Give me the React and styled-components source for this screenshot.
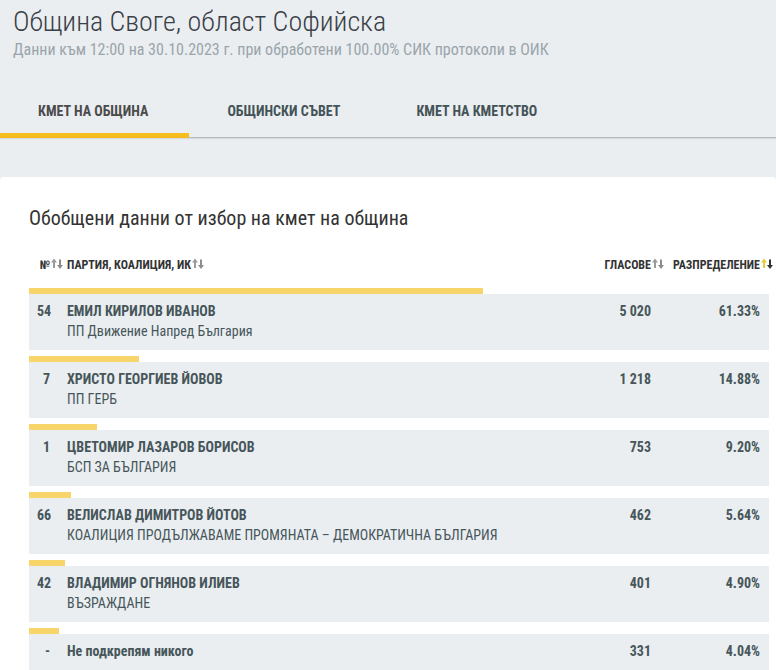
import React, { useState } from "react";
import styled, { createGlobalStyle } from "styled-components";

const GlobalStyle = createGlobalStyle`
  * {
    box-sizing: border-box;
  }

  body {
    margin: 0;
    background: #eaeef1;
    color: #47565a;
    font-family: "Roboto Condensed", Roboto, "Liberation Sans", sans-serif;
    font-size: 14px;
    line-height: 20px;
  }
`;

const Header = styled.header`
  padding: 4px 13px 28px;
`;

const Title = styled.h1`
  margin: 0;
  color: #3a3f47;
  font-size: 28px;
  font-weight: 300;
  line-height: 36px;
`;

const Subtitle = styled.p`
  margin: 0;
  color: #9aa5ab;
  font-size: 16px;
  line-height: 20px;
`;

const Tabs = styled.nav`
  display: flex;
  height: 50px;
  border-bottom: 1px solid #b3bac0;
  box-shadow: 0 1px 1px rgba(0, 0, 0, 0.08);
`;

const Tab = styled.button`
  margin-bottom: -1px;
  padding: 0 ${props => (props.$active ? "41px" : "38px")} 0 38px;
  border: 0;
  border-bottom: 5px solid ${props => (props.$active ? "#f5be1e" : "transparent")};
  background: none;
  color: ${props => (props.$active ? "#4b4b4b" : "#445357")};
  font: inherit;
  font-weight: 700;
  cursor: pointer;
`;

const Panel = styled.main`
  margin-top: 39px;
  padding: 27px 7px 0 29px;
  border-radius: 4px 4px 0 0;
  background: #fff;
`;

const PanelTitle = styled.h2`
  margin: 0 0 18px;
  color: #333;
  font-size: 20px;
  font-weight: 400;
  line-height: 28px;
`;

const Table = styled.table`
  width: 100%;
  border-collapse: collapse;
  table-layout: fixed;
`;

const Col = styled.col`
  width: ${props => props.$width || "auto"};
`;

const HeadCell = styled.th`
  height: 32px;
  padding: 4px 9px 4px 8px;
  text-align: ${props => props.$align || "left"};
  vertical-align: top;
`;

const SortButton = styled.button`
  position: relative;
  padding: 0;
  border: 0;
  background: none;
  color: #333;
  font: inherit;
  font-size: 12px;
  font-weight: 700;
  white-space: nowrap;
  cursor: pointer;
`;

const SortArrows = styled.svg`
  position: absolute;
  top: 3px;
  left: 100%;
  margin-left: 1px;
`;

const BarCell = styled.td`
  padding: 6px 0 0;
`;

const Bar = styled.div`
  height: 6px;
  background: #f7d56b;
`;

const Row = styled.tr`
  height: 56px;
  background: #eaeef1;
`;

const Cell = styled.td`
  padding: 7px 9px 9px 8px;
  font-weight: 700;
  text-align: ${props => props.$align || "left"};
  vertical-align: top;
`;

const Party = styled.div`
  font-weight: 400;
`;

const tabs = ["КМЕТ НА ОБЩИНА", "ОБЩИНСКИ СЪВЕТ", "КМЕТ НА КМЕТСТВО"];

const columns = [
  { id: "number", label: "№", align: "right" },
  { id: "name", label: "ПАРТИЯ, КОАЛИЦИЯ, ИК" },
  { id: "votes", label: "ГЛАСОВЕ", align: "right" },
  { id: "share", label: "РАЗПРЕДЕЛЕНИЕ", align: "right" }
];

const results = [
  { number: "54", name: "ЕМИЛ КИРИЛОВ ИВАНОВ", party: "ПП Движение Напред България", votes: "5 020", share: "61.33%" },
  { number: "7", name: "ХРИСТО ГЕОРГИЕВ ЙОВОВ", party: "ПП ГЕРБ", votes: "1 218", share: "14.88%" },
  { number: "1", name: "ЦВЕТОМИР ЛАЗАРОВ БОРИСОВ", party: "БСП ЗА БЪЛГАРИЯ", votes: "753", share: "9.20%" },
  { number: "66", name: "ВЕЛИСЛАВ ДИМИТРОВ ЙОТОВ", party: "КОАЛИЦИЯ ПРОДЪЛЖАВАМЕ ПРОМЯНАТА – ДЕМОКРАТИЧНА БЪЛГАРИЯ", votes: "462", share: "5.64%" },
  { number: "42", name: "ВЛАДИМИР ОГНЯНОВ ИЛИЕВ", party: "ВЪЗРАЖДАНЕ", votes: "401", share: "4.90%" },
  { number: "-", name: "Не подкрепям никого", votes: "331", share: "4.04%" }
];

function SortIcon({ active }) {
  return (
    <SortArrows width="12" height="12" viewBox="0 0 12 12" aria-hidden="true">
      <path d="M3 0.5L6 4.5H4V10H2V4.5H0Z" fill={active ? "#e3cb3a" : "#9b9b9b"} />
      <path d="M8 1.5H10V7H12L9 11L6 7H8Z" fill={active ? "#333" : "#8c8c8c"} />
    </SortArrows>
  );
}

function ResultRow({ result }) {
  return (
    <>
      <tr>
        <BarCell colSpan={4}>
          <Bar style={{ width: result.share }} />
        </BarCell>
      </tr>
      <Row>
        <Cell $align="right">{result.number}</Cell>
        <Cell>
          {result.name}
          {result.party && <Party>{result.party}</Party>}
        </Cell>
        <Cell $align="right">{result.votes}</Cell>
        <Cell $align="right">{result.share}</Cell>
      </Row>
    </>
  );
}

export default function App() {
  const [activeTab, setActiveTab] = useState(0);
  const [sortBy, setSortBy] = useState("share");

  return (
    <>
      <GlobalStyle />
      <Header>
        <Title>Община Своге, област Софийска</Title>
        <Subtitle>
          Данни към 12:00 на 30.10.2023 г. при обработени 100.00% СИК протоколи в ОИК
        </Subtitle>
      </Header>
      <Tabs>
        {tabs.map((tab, index) => (
          <Tab key={tab} $active={index === activeTab} onClick={() => setActiveTab(index)}>
            {tab}
          </Tab>
        ))}
      </Tabs>
      <Panel>
        <PanelTitle>Обобщени данни от избор на кмет на община</PanelTitle>
        <Table>
          <colgroup>
            <Col $width="30px" />
            <Col />
            <Col $width="100px" />
            <Col $width="109px" />
          </colgroup>
          <thead>
            <tr>
              {columns.map(column => (
                <HeadCell key={column.id} $align={column.align}>
                  <SortButton onClick={() => setSortBy(column.id)}>
                    {column.label}
                    <SortIcon active={column.id === sortBy} />
                  </SortButton>
                </HeadCell>
              ))}
            </tr>
          </thead>
          <tbody>
            {results.map(result => (
              <ResultRow key={result.number} result={result} />
            ))}
          </tbody>
        </Table>
      </Panel>
    </>
  );
}
